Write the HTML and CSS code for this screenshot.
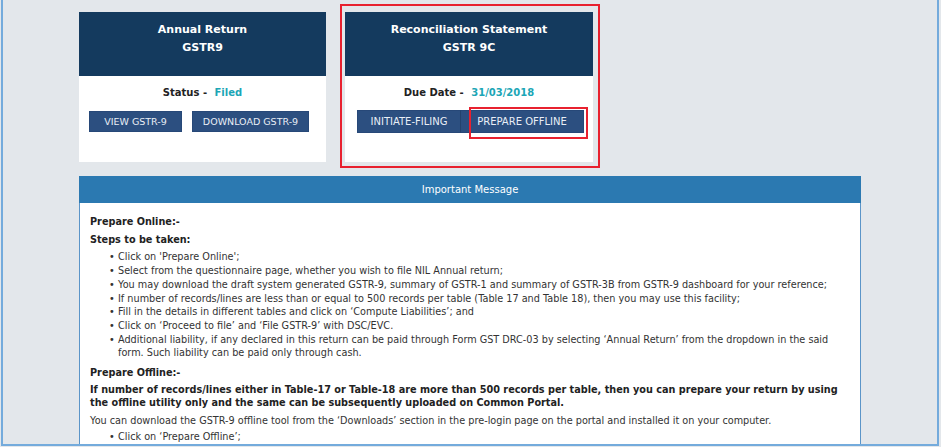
FILE: index.html
```html
<!DOCTYPE html>
<html lang="en">
<head>
    <meta charset="UTF-8">
    <meta name="viewport" content="width=device-width, initial-scale=1.0">
    <title>GSTR-9 Annual Return</title>
    <link rel="stylesheet" href="styles.css">
</head>
<body>
    <div class="frame">
        <div class="return-cards">
            <div class="return-card">
                <div class="card-head">Annual Return<br>GSTR9</div>
                <div class="card-body">
                    <div class="card-status">Status - <span class="status-value">Filed</span></div>
                    <div class="card-actions">
                        <button class="btn btn-view">VIEW GSTR-9</button>
                        <button class="btn btn-download">DOWNLOAD GSTR-9</button>
                    </div>
                </div>
            </div>

            <div class="highlight">
                <div class="return-card">
                    <div class="card-head">Reconciliation Statement<br>GSTR 9C</div>
                    <div class="card-body">
                        <div class="card-status">Due Date - <span class="status-value">31/03/2018</span></div>
                        <div class="card-actions joined">
                            <button class="btn btn-initiate">INITIATE-FILING</button>
                            <button class="btn btn-offline">PREPARE OFFLINE</button>
                            <span class="highlight-btn"></span>
                        </div>
                    </div>
                </div>
            </div>
        </div>

        <div class="message-panel">
            <div class="message-head">Important Message</div>
            <div class="message-body">
                <p class="label">Prepare Online:-</p>
                <p class="label">Steps to be taken:</p>
                <ul class="steps">
                    <li>Click on 'Prepare Online';</li>
                    <li>Select from the questionnaire page, whether you wish to file NIL Annual return;</li>
                    <li>You may download the draft system generated GSTR-9, summary of GSTR-1 and summary of GSTR-3B from GSTR-9 dashboard for your reference;</li>
                    <li>If number of records/lines are less than or equal to 500 records per table (Table 17 and Table 18), then you may use this facility;</li>
                    <li>Fill in the details in different tables and click on ‘Compute Liabilities’; and</li>
                    <li>Click on ‘Proceed to file’ and ‘File GSTR-9’ with DSC/EVC.</li>
                    <li>Additional liability, if any declared in this return can be paid through Form GST DRC-03 by selecting ‘Annual Return’ from the dropdown in the said form. Such liability can be paid only through cash.</li>
                </ul>
                <p class="label offline-label">Prepare Offline:-</p>
                <p class="note">If number of records/lines either in Table-17 or Table-18 are more than 500 records per table, then you can prepare your return by using the offline utility only and the same can be subsequently uploaded on Common Portal.</p>
                <p class="plain">You can download the GSTR-9 offline tool from the ‘Downloads’ section in the pre-login page on the portal and installed it on your computer.</p>
                <ul class="steps">
                    <li>Click on ‘Prepare Offline’;</li>
                </ul>
            </div>
        </div>
    </div>
</body>
</html>
```

FILE: styles.css
```css
body {
    font-family: "DejaVu Sans", Verdana, sans-serif;
    background-color: #e3e7eb;
    margin: 0;
    overflow: hidden;
}

.frame {
    margin-left: 1px;
    width: 938px;
    height: 446px;
    box-sizing: border-box;
    border: 2px solid #74abdc;
    border-top: none;
    padding-left: 76px;
    overflow: hidden;
}

.return-cards {
    display: flex;
    align-items: flex-start;
    padding-top: 4px;
}

.return-card {
    width: 247px;
    background-color: white;
}

.return-cards > .return-card {
    margin-top: 8px;
}

.card-head {
    height: 64px;
    box-sizing: border-box;
    padding-top: 9px;
    background-color: #143a5e;
    color: white;
    font-size: 11px;
    font-weight: bold;
    line-height: 18px;
    text-align: center;
}

.card-body {
    height: 86px;
    box-sizing: border-box;
    padding-top: 10px;
}

.card-status {
    font-size: 10px;
    font-weight: bold;
    line-height: 14px;
    color: #222;
    text-align: center;
}

.status-value {
    color: #1ca6b6;
    margin-left: 4px;
}

.card-actions {
    display: flex;
    gap: 10px;
    margin-top: 11px;
    padding-left: 10px;
}

.btn {
    height: 21px;
    padding: 0;
    border: 1px solid #274878;
    background-color: #2c4f80;
    color: #e9eef6;
    font-family: inherit;
    font-size: 9.5px;
}

.btn-view {
    width: 93px;
}

.btn-download {
    width: 117px;
}

.card-actions.joined {
    position: relative;
    gap: 0;
    padding-left: 12px;
    margin-top: 10px;
}

.joined .btn {
    height: 23px;
    font-size: 10px;
}

.btn-initiate {
    width: 104px;
    border-right-color: #24426d;
}

.btn-offline {
    width: 123px;
    border-left: none;
}

.highlight {
    margin-left: 14px;
    border: 2px solid #e8212f;
    padding: 6px 5px 4px 3px;
}

.highlight .return-card {
    width: 248px;
}

.highlight-btn {
    position: absolute;
    left: 124px;
    top: -3px;
    width: 115px;
    height: 28px;
    border: 2px solid #e8212f;
}

.message-panel {
    width: 782px;
    margin-top: 8px;
    background-color: white;
}

.message-head {
    height: 27px;
    line-height: 27px;
    background-color: #2b79b1;
    color: white;
    font-size: 10px;
    text-align: center;
}

.message-body {
    border-left: 1px solid #5b95c8;
    border-right: 1px solid #5b95c8;
    padding: 12px 15px 20px 10px;
    font-size: 9.7px;
    line-height: 13.7px;
    color: #333;
}

.message-body p {
    margin: 0;
}

.label {
    font-weight: bold;
    color: #222;
    margin-bottom: 4px !important;
}

.steps {
    margin: 2px 0 6px;
    padding-left: 28px;
    list-style: none;
}

.steps li::before {
    content: "•";
    display: inline-block;
    width: 9px;
    margin-left: -9px;
}

.offline-label {
    margin-bottom: 3px !important;
}

.note {
    font-weight: bold;
    color: #222;
    margin-bottom: 3.5px !important;
}

.plain + .steps {
    margin-top: 3px;
}
```
